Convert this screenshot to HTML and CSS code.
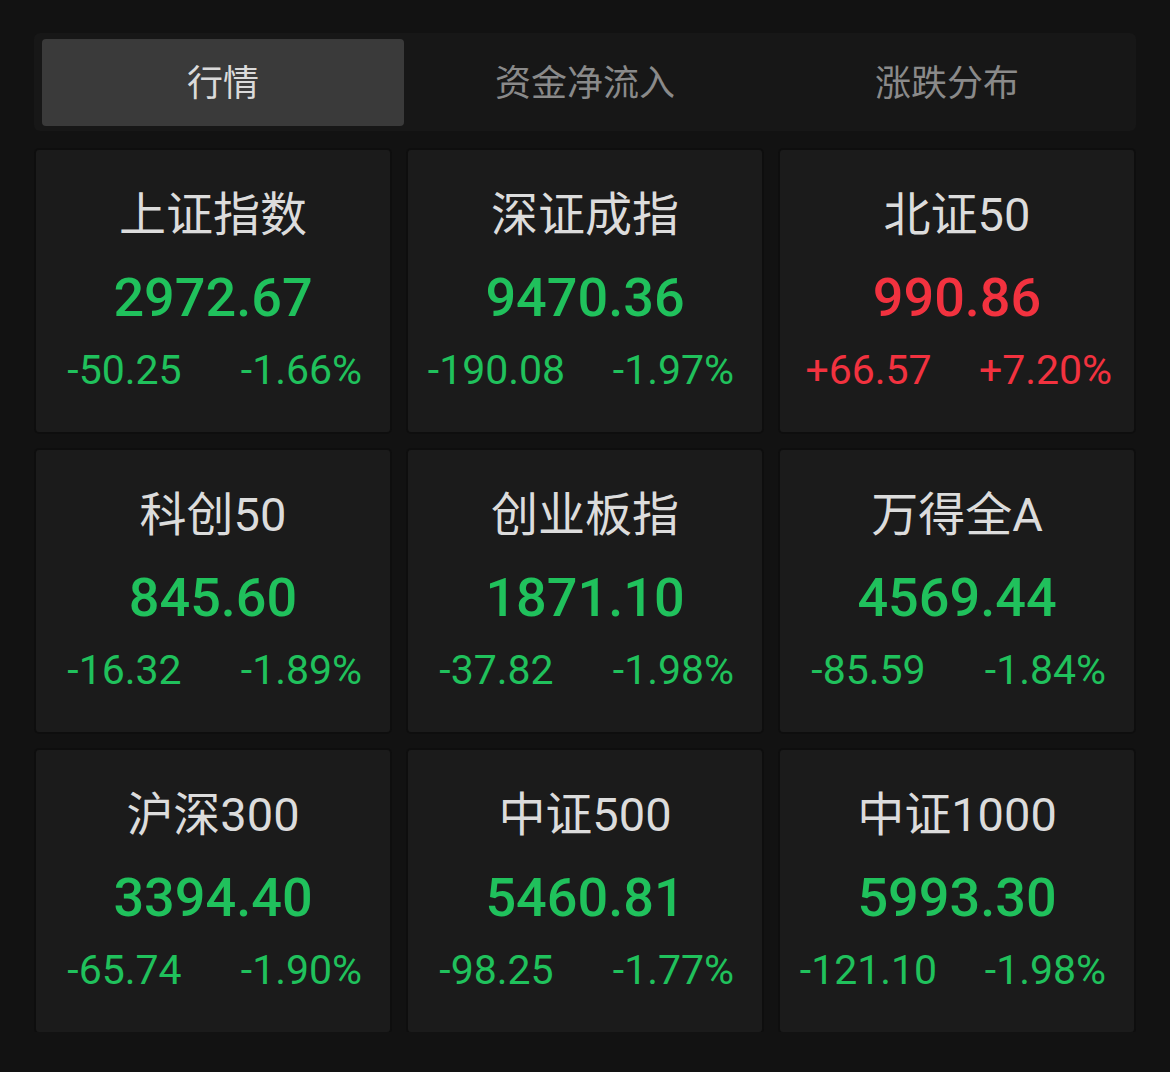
FILE: index.html
```html
<!DOCTYPE html>
<html lang="zh-CN">
<head>
    <meta charset="UTF-8">
    <meta name="viewport" content="width=device-width, initial-scale=1.0">
    <title>行情</title>
    <link rel="stylesheet" href="styles.css">
</head>
<body>
    <div class="page">
        <div class="tabs">
            <div class="tab active">行情</div>
            <div class="tab">资金净流入</div>
            <div class="tab">涨跌分布</div>
        </div>

        <div class="grid">
            <div class="card down">
                <div class="name">上证指数</div>
                <div class="price">2972.67</div>
                <div class="change"><span>-50.25</span><span>-1.66%</span></div>
            </div>
            <div class="card down">
                <div class="name">深证成指</div>
                <div class="price">9470.36</div>
                <div class="change"><span>-190.08</span><span>-1.97%</span></div>
            </div>
            <div class="card up">
                <div class="name">北证50</div>
                <div class="price">990.86</div>
                <div class="change"><span>+66.57</span><span>+7.20%</span></div>
            </div>
            <div class="card down">
                <div class="name">科创50</div>
                <div class="price">845.60</div>
                <div class="change"><span>-16.32</span><span>-1.89%</span></div>
            </div>
            <div class="card down">
                <div class="name">创业板指</div>
                <div class="price">1871.10</div>
                <div class="change"><span>-37.82</span><span>-1.98%</span></div>
            </div>
            <div class="card down">
                <div class="name">万得全A</div>
                <div class="price">4569.44</div>
                <div class="change"><span>-85.59</span><span>-1.84%</span></div>
            </div>
            <div class="card down">
                <div class="name">沪深300</div>
                <div class="price">3394.40</div>
                <div class="change"><span>-65.74</span><span>-1.90%</span></div>
            </div>
            <div class="card down">
                <div class="name">中证500</div>
                <div class="price">5460.81</div>
                <div class="change"><span>-98.25</span><span>-1.77%</span></div>
            </div>
            <div class="card down">
                <div class="name">中证1000</div>
                <div class="price">5993.30</div>
                <div class="change"><span>-121.10</span><span>-1.98%</span></div>
            </div>
        </div>
    </div>
</body>
</html>
```

FILE: styles.css
```css
body {
    margin: 0;
    background: #121212;
    font-family: Roboto, "Noto Sans CJK SC", sans-serif;
}

.page {
    padding: 33px 34px 0;
}

.tabs {
    display: flex;
    padding: 6px 8px 5px;
    background: #171717;
    border-radius: 6px;
}

.tab {
    flex: 1;
    height: 87px;
    padding-bottom: 6px;
    box-sizing: border-box;
    display: flex;
    align-items: center;
    justify-content: center;
    font-size: 36px;
    color: #8a8a8a;
    border-radius: 4px;
}

.tab.active {
    background: #3a3a3a;
    color: #dadada;
}

.grid {
    display: grid;
    grid-template-columns: repeat(3, 354px);
    grid-auto-rows: 282px;
    gap: 18px;
    margin: 19px 2px 0;
}

.card {
    background: #1b1b1b;
    border-radius: 3px;
    padding-top: 37px;
    box-sizing: border-box;
    box-shadow: 0 0 0 2px #0e0e0e;
}

.name {
    font-size: 47px;
    line-height: 56px;
    color: #dcdcdc;
    text-align: center;
}

.price {
    margin-top: 23px;
    font-size: 54px;
    line-height: 64px;
    font-weight: 500;
    text-align: center;
}

.change {
    display: flex;
    margin-top: 16px;
    font-size: 41px;
    line-height: 48px;
}

.change span {
    flex: 1;
    text-align: center;
}

.down .price, .down .change {
    color: #20c15c;
}

.up .price, .up .change {
    color: #f2323f;
}
```
